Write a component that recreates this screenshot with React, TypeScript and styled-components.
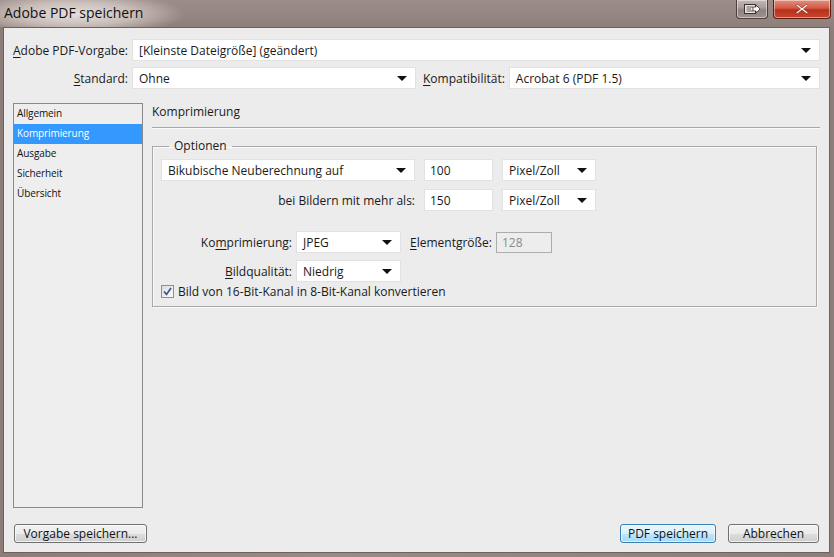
import { PropsWithChildren } from 'react';
import styled, { createGlobalStyle, css } from 'styled-components';

const GlobalStyle = createGlobalStyle`
  html, body {
    margin: 0;
    padding: 0;
    width: 834px;
    height: 557px;
    overflow: hidden;
  }
  body {
    font-family: "Open Sans", "Noto Sans", sans-serif;
    font-size: 12px;
    color: #1a1a1a;
  }
`

const Window = styled.div`
  width: 834px;
  height: 557px;
  display: flex;
  flex-direction: column;
  background: linear-gradient(90deg, #8d7c77 0%, #9a8a85 40%, #8e7e79 100%);
  box-sizing: border-box;
`

const TitleBar = styled.div`
  height: 29px;
  display: flex;
  justify-content: space-between;
  align-items: flex-start;
  background:
    radial-gradient(ellipse 110px 22px at 75px 14px, rgba(235, 228, 225, 0.95) 0%, rgba(220, 210, 206, 0.7) 55%, rgba(220, 210, 206, 0) 100%),
    linear-gradient(180deg, #9d8c87 0%, #8f7f7a 100%);
`

const Title = styled.div`
  font-size: 14px;
  line-height: 14px;
  padding: 6px 0 0 4px;
  color: #111;
`

const Controls = styled.div`
  display: flex;
  gap: 5px;
  padding-right: 3px;
`

const CaptionButton = styled.div<{ close?: boolean }>`
  height: 19px;
  box-sizing: border-box;
  display: flex;
  align-items: center;
  justify-content: center;
  border: 1px solid #4d3f3b;
  border-top: none;
  border-radius: 0 0 4px 4px;
  ${p => p.close ? css`
    width: 58px;
    background: linear-gradient(180deg, #e3917f 0%, #d15a45 45%, #b8301c 55%, #c9462e 100%);
    border-color: #5a1e14;
  ` : css`
    width: 32px;
    background: linear-gradient(180deg, #c2b8b5 0%, #a79b97 45%, #8f827e 55%, #a0938f 100%);
  `}
  box-shadow: inset 0 0 0 1px rgba(255, 255, 255, 0.45);
`

const Client = styled.div`
  flex: 1;
  margin: 0 4px 4px 3px;
  background: #ececec;
  border: 1px solid #6f625e;
  padding: 11px 9px 9px 9px;
  display: flex;
  flex-direction: column;
`

const TopGrid = styled.div`
  display: grid;
  grid-template-columns: 115px 284px auto 1fr;
  column-gap: 4px;
  row-gap: 6px;
  align-items: center;
`

const Label = styled.span<{ right?: boolean }>`
  white-space: nowrap;
  text-align: ${p => p.right ? 'right' : 'left'};
  color: #1a1a1a;
`

const Key = styled.span`
  text-decoration: underline;
  text-underline-offset: 2px;
`

const SelectBox = styled.div<{ span?: number }>`
  height: 22px;
  box-sizing: border-box;
  background: #fff;
  border: 1px solid #e2e2e2;
  display: flex;
  align-items: center;
  justify-content: space-between;
  padding: 0 8px 0 6px;
  white-space: nowrap;
  ${p => p.span && css`grid-column: span ${p.span};`}
`

const Arrow = styled.span`
  width: 0;
  height: 0;
  border-left: 5px solid transparent;
  border-right: 5px solid transparent;
  border-top: 5px solid #111;
  flex: none;
`

const Select = ({ children, ...rest }: PropsWithChildren<{ span?: number }>) => (
  <SelectBox {...rest}>
    <span>{children}</span>
    <Arrow />
  </SelectBox>
)

const Body = styled.div`
  margin-top: 14px;
  height: 405px;
  display: flex;
  gap: 9px;
`

const Sidebar = styled.ul`
  margin: 0;
  padding: 0;
  list-style: none;
  width: 130px;
  box-sizing: border-box;
  border: 1px solid #8a8a8a;
  background: #eeeeee;
`

const NavItem = styled.li<{ active?: boolean }>`
  height: 20px;
  line-height: 19px;
  padding-left: 3px;
  font-size: 10px;
  letter-spacing: -0.1px;
  color: ${p => p.active ? '#fff' : '#111'};
  background: ${p => p.active ? '#3399ff' : 'transparent'};
`

const Panel = styled.div`
  flex: 1;
  display: flex;
  flex-direction: column;
`

const PanelHeading = styled.div`
  height: 24px;
  line-height: 17px;
  border-bottom: 1px solid #a8a8a8;
  box-shadow: 0 1px 0 #fafafa;
`

const Fieldset = styled.fieldset`
  margin: 11px 3px 0 0;
  padding: 6px 8px 7px 8px;
  border: 1px solid #a8a8a8;
  border-radius: 0;
  box-shadow: inset 1px 1px 0 #fafafa, 1px 1px 0 #fafafa;
  display: flex;
  flex-direction: column;
`

const Legend = styled.legend`
  padding: 0 5px;
  margin-left: 8px;
  line-height: 14px;
`

const ResampleGrid = styled.div`
  display: grid;
  grid-template-columns: 254px 69px 94px;
  column-gap: 9px;
  row-gap: 8px;
  align-items: center;
`

const TextInput = styled.div<{ disabled?: boolean; w?: number }>`
  height: ${p => p.disabled ? 21 : 22}px;
  width: ${p => p.w ?? 69}px;
  box-sizing: border-box;
  display: flex;
  align-items: center;
  padding-left: 5px;
  background: ${p => p.disabled ? '#ededed' : '#fff'};
  border: 1px solid ${p => p.disabled ? '#acacac' : '#e2e2e2'};
  color: ${p => p.disabled ? '#8a8a8a' : '#1a1a1a'};
`

const CompressGrid = styled.div`
  margin-top: 20px;
  display: grid;
  grid-template-columns: 131px 105px auto auto;
  column-gap: 4px;
  row-gap: 7px;
  align-items: center;
  justify-content: start;
`

const InlineLabel = styled.span<{ offset?: number }>`
  margin-left: ${p => p.offset ?? 4}px;
  white-space: nowrap;
`

const CheckRow = styled.label`
  margin-top: 1px;
  display: flex;
  align-items: center;
  gap: 4px;
  height: 16px;
`

const CheckBox = styled.span`
  width: 13px;
  height: 13px;
  box-sizing: border-box;
  border: 1px solid #8e8f8f;
  background: linear-gradient(135deg, #dcdcdc 0%, #fbfbfb 100%);
  display: flex;
  align-items: center;
  justify-content: center;
`

const Footer = styled.div`
  margin-top: 16px;
  display: flex;
  align-items: center;
  padding: 0 1px 0 1px;
`

const Button = styled.button<{ primary?: boolean; w: number }>`
  width: ${p => p.w}px;
  height: 19px;
  padding: 0;
  font-family: "Open Sans", "Noto Sans", sans-serif;
  font-size: 12px;
  line-height: 15px;
  color: #111;
  border-radius: 3px;
  border: 1px solid ${p => p.primary ? '#3c7fb1' : '#707070'};
  background: ${p => p.primary
    ? 'linear-gradient(180deg, #eaf6fd 0%, #d9f0fc 50%, #bee6fd 51%, #a7d9f5 100%)'
    : 'linear-gradient(180deg, #f2f2f2 0%, #ebebeb 50%, #dddddd 51%, #cfcfcf 100%)'};
  box-shadow: inset 0 0 0 1px ${p => p.primary ? 'rgba(255,255,255,0.6)' : 'rgba(255,255,255,0.7)'};
`

const Spacer = styled.div`
  flex: 1;
`

const RightButtons = styled.div`
  display: flex;
  gap: 12px;
`

const navItems = ['Allgemein', 'Komprimierung', 'Ausgabe', 'Sicherheit', 'Übersicht']

export default function App() {
  return (
    <>
      <GlobalStyle />
      <Window>
        <TitleBar>
          <Title>Adobe PDF speichern</Title>
          <Controls>
            <CaptionButton>
              <svg width="18" height="12" viewBox="0 0 18 12">
                <rect x="1.5" y="1.5" width="11" height="9" fill="#e8e4e2" stroke="#3a3230" strokeWidth="1" />
                <line x1="3.5" y1="4" x2="10" y2="4" stroke="#6a605c" />
                <line x1="3.5" y1="6" x2="8" y2="6" stroke="#6a605c" />
                <line x1="3.5" y1="8" x2="10" y2="8" stroke="#6a605c" />
                <path d="M10 4 L13 4 L13 2 L17 6 L13 10 L13 8 L10 8 Z" fill="#ffffff" stroke="#3a3230" strokeWidth="0.8" />
              </svg>
            </CaptionButton>
            <CaptionButton close>
              <svg width="14" height="12" viewBox="0 0 14 12">
                <path d="M2 1 L7 5 L12 1 L13 2.5 L8.5 6 L13 9.5 L12 11 L7 7 L2 11 L1 9.5 L5.5 6 L1 2.5 Z" fill="#ffffff" stroke="#7a2a1c" strokeWidth="0.6" />
              </svg>
            </CaptionButton>
          </Controls>
        </TitleBar>
        <Client>
          <TopGrid>
            <Label><Key>A</Key>dobe PDF-Vorgabe:</Label>
            <Select span={3}>[Kleinste Dateigröße] (geändert)</Select>
            <Label right><Key>S</Key>tandard:</Label>
            <Select>Ohne</Select>
            <InlineLabel offset={3}><Key>K</Key>ompatibilität:</InlineLabel>
            <Select>Acrobat 6 (PDF 1.5)</Select>
          </TopGrid>
          <Body>
            <Sidebar>
              {navItems.map(item => (
                <NavItem key={item} active={item === 'Komprimierung'}>{item}</NavItem>
              ))}
            </Sidebar>
            <Panel>
              <PanelHeading>Komprimierung</PanelHeading>
              <Fieldset>
                <Legend>Optionen</Legend>
                <ResampleGrid>
                  <Select>Bikubische Neuberechnung auf</Select>
                  <TextInput>100</TextInput>
                  <Select>Pixel/Zoll</Select>
                  <Label right>bei Bildern mit mehr als:</Label>
                  <TextInput>150</TextInput>
                  <Select>Pixel/Zoll</Select>
                </ResampleGrid>
                <CompressGrid>
                  <Label right>Ko<Key>m</Key>primierung:</Label>
                  <Select>JPEG</Select>
                  <InlineLabel offset={5}><Key>E</Key>lementgröße:</InlineLabel>
                  <TextInput disabled w={56}>128</TextInput>
                  <Label right><Key>B</Key>ildqualität:</Label>
                  <Select>Niedrig</Select>
                </CompressGrid>
                <CheckRow>
                  <CheckBox>
                    <svg width="9" height="9" viewBox="0 0 9 9">
                      <path d="M1 4.5 L3.5 7.5 L8 1" fill="none" stroke="#3a4f8a" strokeWidth="1.6" />
                    </svg>
                  </CheckBox>
                  Bild von 16-Bit-Kanal in 8-Bit-Kanal konvertieren
                </CheckRow>
              </Fieldset>
            </Panel>
          </Body>
          <Footer>
            <Button w={133}>Vorgabe speichern...</Button>
            <Spacer />
            <RightButtons>
              <Button primary w={96}>PDF speichern</Button>
              <Button w={91}>Abbrechen</Button>
            </RightButtons>
          </Footer>
        </Client>
      </Window>
    </>
  )
}
